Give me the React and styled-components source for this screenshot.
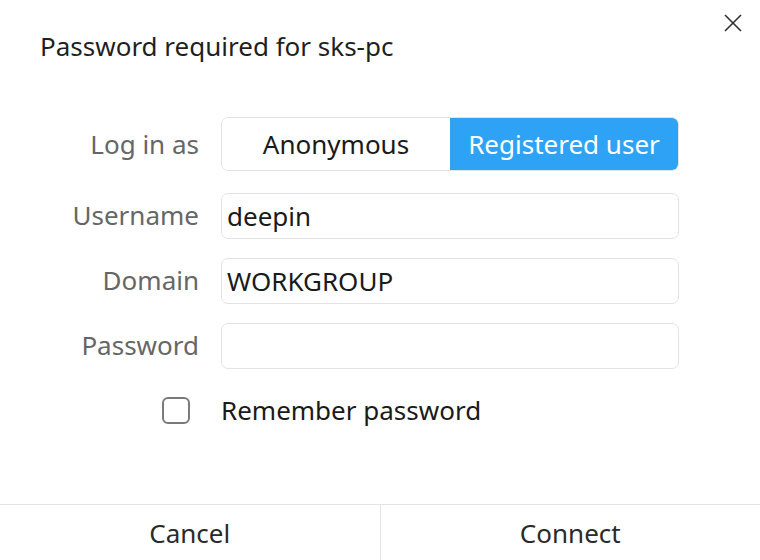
import React, { useState } from 'react';
import styled, { createGlobalStyle } from 'styled-components';

const GlobalStyle = createGlobalStyle`
  html, body {
    margin: 0;
    padding: 0;
    background: #ffffff;
  }
  * {
    box-sizing: border-box;
  }
`;

const Dialog = styled.div`
  width: 760px;
  height: 560px;
  background: #ffffff;
  border-radius: 14px;
  display: flex;
  flex-direction: column;
  font-family: "Noto Sans", "Open Sans", sans-serif;
  overflow: hidden;
  position: relative;
`;

const Header = styled.div`
  height: 117px;
  padding: 27px 40px 0 40px;
`;

const Title = styled.div`
  font-size: 26px;
  color: #1f1f1f;
  line-height: 38px;
`;

const CloseButton = styled.button`
  position: absolute;
  top: 10px;
  right: 14px;
  width: 26px;
  height: 26px;
  border: none;
  background: transparent;
  padding: 0;
  display: flex;
  align-items: center;
  justify-content: center;
  cursor: pointer;
`;

const Form = styled.div`
  display: grid;
  grid-template-columns: 199px 458px;
  column-gap: 22px;
  row-gap: 19px;
  align-items: center;
  align-content: start;
  flex: 1;
`;

const Label = styled.div`
  font-size: 26px;
  color: #666666;
  text-align: right;
  line-height: 34px;
  margin-bottom: 3px;
`;

const Segmented = styled.div`
  display: flex;
  height: 54px;
  border: 1px solid #e3e3e3;
  border-radius: 7px;
  overflow: hidden;
  margin-bottom: 3px;
`;

const Segment = styled.button`
  flex: 1;
  border: none;
  font-family: inherit;
  font-size: 26px;
  background: ${p => (p.$active ? '#2ea3f5' : '#ffffff')};
  color: ${p => (p.$active ? '#ffffff' : '#1a1a1a')};
  cursor: pointer;
  padding: 0;
`;

const Input = styled.input`
  height: 46px;
  width: 100%;
  border: 1.5px solid #e3e3e3;
  border-radius: 7px;
  font-family: inherit;
  font-size: 26px;
  color: #1a1a1a;
  padding: 0 5px;
  outline: none;
  background: #ffffff;
`;

const CheckCell = styled.div`
  display: flex;
  justify-content: flex-end;
  padding-right: 9px;
  margin-top: 4px;
`;

const Checkbox = styled.span`
  width: 28px;
  height: 27px;
  border: 2px solid #7a7a7a;
  border-radius: 6px;
  display: block;
`;

const CheckText = styled.div`
  font-size: 26px;
  color: #1a1a1a;
  margin-top: 4px;
  line-height: 36px;
`;

const Footer = styled.div`
  height: 56px;
  border-top: 1.5px solid #e3e3e3;
  display: flex;
`;

const FooterButton = styled.button`
  flex: 1;
  border: none;
  background: transparent;
  font-family: inherit;
  font-size: 26px;
  color: #2a2a2a;
  cursor: pointer;
  padding: 0;
  & + & {
    border-left: 1.5px solid #e3e3e3;
  }
`;

export default function App() {
  const [mode, setMode] = useState('registered');
  return (
    <>
      <GlobalStyle />
      <Dialog>
        <CloseButton aria-label="Close">
          <svg width="18" height="18" viewBox="0 0 18 18">
            <path d="M1 1L17 17M17 1L1 17" stroke="#303030" strokeWidth="1.6" fill="none" />
          </svg>
        </CloseButton>
        <Header>
          <Title>Password required for sks-pc</Title>
        </Header>
        <Form>
          <Label>Log in as</Label>
          <Segmented>
            <Segment $active={mode === 'anonymous'} onClick={() => setMode('anonymous')}>
              Anonymous
            </Segment>
            <Segment $active={mode === 'registered'} onClick={() => setMode('registered')}>
              Registered user
            </Segment>
          </Segmented>
          <Label>Username</Label>
          <Input defaultValue="deepin" />
          <Label>Domain</Label>
          <Input defaultValue="WORKGROUP" />
          <Label>Password</Label>
          <Input type="password" />
          <CheckCell>
            <Checkbox />
          </CheckCell>
          <CheckText>Remember password</CheckText>
        </Form>
        <Footer>
          <FooterButton>Cancel</FooterButton>
          <FooterButton>Connect</FooterButton>
        </Footer>
      </Dialog>
    </>
  );
}
